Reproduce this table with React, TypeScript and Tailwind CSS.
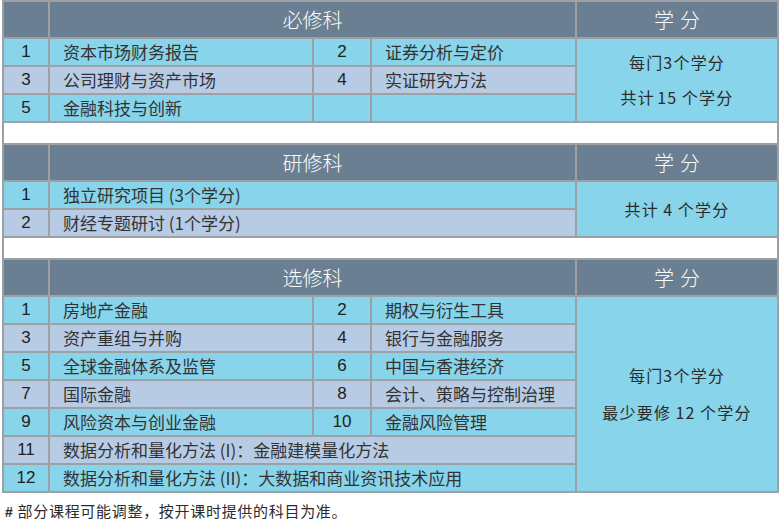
import React from "react";

const HEAD = "bg-[#6a7f91]";
const BLUE = "bg-[#88d4ea]";
const LAV = "bg-[#b8cbe4]";

const cjk = { fontFamily: '"Noto Sans CJK SC", "Noto Sans", sans-serif' };
const num = { fontFamily: '"Liberation Sans", Arial, "Noto Sans CJK SC", sans-serif' };

function Header({ title }: { title: string }) {
  return (
    <>
      <div className={`${HEAD} h-[35px]`} />
      <div
        className={`${HEAD} col-span-3 flex items-center justify-center text-[20px] font-light text-white`}
        style={cjk}
      >
        {title}
      </div>
      <div
        className={`${HEAD} flex items-center justify-center text-[20px] font-light text-white`}
        style={cjk}
      >
        <span>学</span>
        <span className="w-[6px]" />
        <span>分</span>
      </div>
    </>
  );
}

function Num({ n, bg }: { n: string; bg: string }) {
  return (
    <div
      className={`${bg} h-[26px] flex items-center justify-center text-[17px] text-[#222]`}
      style={num}
    >
      {n}
    </div>
  );
}

function Txt({ t, bg, span }: { t: string; bg: string; span?: boolean }) {
  return (
    <div
      className={`${bg} h-[26px] flex items-center pl-[13px] text-[17px] text-[#333] whitespace-nowrap ${
        span ? "col-span-3" : ""
      }`}
      style={cjk}
    >
      {t}
    </div>
  );
}

function Spacer() {
  return <div className="col-span-5 h-[20px] bg-white" />;
}

function Credit({ lines, rows, lh }: { lines: string[]; rows: string; lh: string }) {
  return (
    <div
      className={`${BLUE} ${rows} flex flex-col items-center justify-center text-[16px] tracking-[1.2px] text-[#2b2b2b] ${lh}`}
      style={cjk}
    >
      {lines.map((l) => (
        <div key={l} className="whitespace-pre">
          {l}
        </div>
      ))}
    </div>
  );
}

export default function App() {
  return (
    <div className="w-[782px] h-[521px] bg-white">
      <div className="ml-[2px] w-[777px] border-2 border-[#9da1a5] bg-[#9da1a5] grid grid-cols-[44px_262px_56px_203px_200px] gap-[2px]">
        {/* 必修科 */}
        <Header title="必修科" />
        <Num n="1" bg={BLUE} />
        <Txt t="资本市场财务报告" bg={BLUE} />
        <Num n="2" bg={BLUE} />
        <Txt t="证券分析与定价" bg={BLUE} />
        <Credit lines={["每门3个学分", "共计\u200a15\u2009个学分"]} rows="row-span-3" lh="leading-[35px]" />
        <Num n="3" bg={LAV} />
        <Txt t="公司理财与资产市场" bg={LAV} />
        <Num n="4" bg={LAV} />
        <Txt t="实证研究方法" bg={LAV} />
        <Num n="5" bg={BLUE} />
        <Txt t="金融科技与创新" bg={BLUE} />
        <div className={`${BLUE} h-[26px]`} />
        <div className={`${BLUE} h-[26px]`} />
        <Spacer />

        {/* 研修科 */}
        <Header title="研修科" />
        <Num n="1" bg={BLUE} />
        <Txt t="独立研究项目 (3个学分)" bg={BLUE} span />
        <Credit lines={["共计\u20094\u2009个学分"]} rows="row-span-2" lh="leading-[36px]" />
        <Num n="2" bg={LAV} />
        <Txt t="财经专题研讨 (1个学分)" bg={LAV} span />
        <Spacer />

        {/* 选修科 */}
        <Header title="选修科" />
        <Num n="1" bg={BLUE} />
        <Txt t="房地产金融" bg={BLUE} />
        <Num n="2" bg={BLUE} />
        <Txt t="期权与衍生工具" bg={BLUE} />
        <Credit lines={["每门3个学分", "最少要修\u200912\u2009个学分"]} rows="row-span-7" lh="leading-[37px]" />
        <Num n="3" bg={LAV} />
        <Txt t="资产重组与并购" bg={LAV} />
        <Num n="4" bg={LAV} />
        <Txt t="银行与金融服务" bg={LAV} />
        <Num n="5" bg={BLUE} />
        <Txt t="全球金融体系及监管" bg={BLUE} />
        <Num n="6" bg={BLUE} />
        <Txt t="中国与香港经济" bg={BLUE} />
        <Num n="7" bg={LAV} />
        <Txt t="国际金融" bg={LAV} />
        <Num n="8" bg={LAV} />
        <Txt t="会计、策略与控制治理" bg={LAV} />
        <Num n="9" bg={BLUE} />
        <Txt t="风险资本与创业金融" bg={BLUE} />
        <Num n="10" bg={BLUE} />
        <Txt t="金融风险管理" bg={BLUE} />
        <Num n="11" bg={LAV} />
        <Txt t="数据分析和量化方法 (I)：金融建模量化方法" bg={LAV} span />
        <Num n="12" bg={BLUE} />
        <Txt t="数据分析和量化方法 (II)：大数据和商业资讯技术应用" bg={BLUE} span />
      </div>
      <div
        className="mt-[8px] pl-[5px] text-[15px] tracking-[0.7px] leading-[20px] text-[#2b2b2b]"
        style={cjk}
      >
        <span className="text-[14px] font-bold" style={num}>#</span> 部分课程可能调整，按开课时提供的科目为准。
      </div>
    </div>
  );
}
